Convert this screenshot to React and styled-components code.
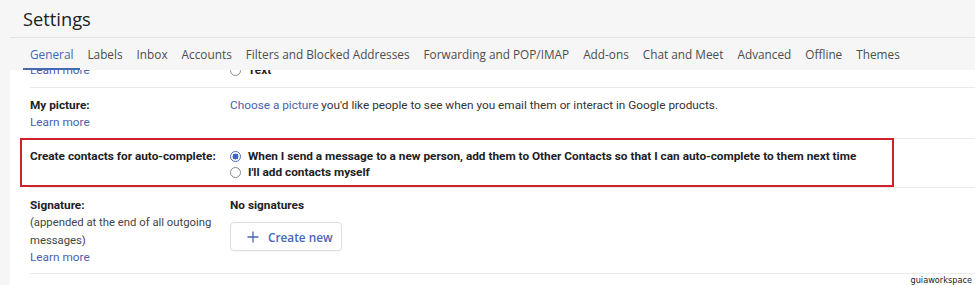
import React from "react";
import styled, { createGlobalStyle } from "styled-components";

const GlobalStyle = createGlobalStyle`
  html, body {
    margin: 0;
    padding: 0;
    background: #f6f6f6;
  }
  body {
    font-family: Roboto, "Liberation Sans", Arial, sans-serif;
    color: #202124;
  }
`;

const tabs = [
  "General",
  "Labels",
  "Inbox",
  "Accounts",
  "Filters and Blocked Addresses",
  "Forwarding and POP/IMAP",
  "Add-ons",
  "Chat and Meet",
  "Advanced",
  "Offline",
  "Themes",
];

const App = () => {
  return (
    <Page>
      <GlobalStyle />
      <Header>
        <Title>Settings</Title>
      </Header>

      <TabBar>
        {tabs.map((t, i) => (
          <Tab key={t} active={i === 0}>
            {t}
          </Tab>
        ))}
      </TabBar>

      <Content>
        {/* row partly scrolled under the tab bar */}
        <ClippedRow>
          <LabelCell>
            <Label>Button labels:</Label>
            <LinkLine>Learn more</LinkLine>
          </LabelCell>
          <ValueCell>
            <Option>
              <Radio />
              <OptionText>Icons</OptionText>
            </Option>
            <Option>
              <Radio />
              <OptionText>Text</OptionText>
            </Option>
          </ValueCell>
        </ClippedRow>

        <Row pad="9px 0 7px">
          <LabelCell>
            <Label>My picture:</Label>
            <LinkLine>Learn more</LinkLine>
          </LabelCell>
          <ValueCell>
            <PlainLine>
              <Link>Choose a picture</Link> you'd like people to see when you
              email them or interact in Google products.
            </PlainLine>
          </ValueCell>
        </Row>

        <Row pad="9px 0 7px" highlighted>
          <LabelCell>
            <Label>Create contacts for auto-complete:</Label>
          </LabelCell>
          <ValueCell>
            <Option dense>
              <Radio checked />
              <OptionText>
                When I send a message to a new person, add them to Other
                Contacts so that I can auto-complete to them next time
              </OptionText>
            </Option>
            <Option dense>
              <Radio />
              <OptionText>I'll add contacts myself</OptionText>
            </Option>
          </ValueCell>
        </Row>

        <Row pad="9px 0 7px">
          <LabelCell>
            <Label>Signature:</Label>
            <Note>(appended at the end of all outgoing</Note>
            <Note>messages)</Note>
            <LinkLine>Learn more</LinkLine>
          </LabelCell>
          <ValueCell>
            <Label>No signatures</Label>
            <CreateButton>
              <svg width="12" height="12" viewBox="0 0 12 12" aria-hidden="true">
                <path d="M6 0.5v11M0.5 6h11" stroke="#4a66b3" strokeWidth="1.3" fill="none" />
              </svg>
              Create new
            </CreateButton>
          </ValueCell>
        </Row>
      </Content>

      <Watermark>guiaworkspace</Watermark>
    </Page>
  );
};

export default App;

const Page = styled.div`
  position: relative;
  width: 975px;
  height: 285px;
  overflow: hidden;
  background: #f6f6f6;
  display: flex;
  flex-direction: column;
`;

const Header = styled.div`
  height: 37px;
  display: flex;
  align-items: center;
  padding-left: 23px;
  box-sizing: border-box;
`;

const Title = styled.h1`
  margin: 0;
  font-family: "Open Sans", Roboto, sans-serif;
  font-weight: 400;
  font-size: 18.3px;
  color: #202124;
`;

const TabBar = styled.nav`
  margin-left: 10px;
  height: 33px;
  border-top: 1px solid #e3e3e3;
  box-sizing: border-box;
  display: flex;
  align-items: stretch;
  padding-left: 13px;
`;

const Tab = styled.div`
  display: flex;
  align-items: center;
  padding: 1px 7px 0;
  font-family: "Open Sans", Roboto, sans-serif;
  font-size: 11.8px;
  white-space: nowrap;
  color: ${(p) => (p.active ? "#4767b0" : "#4d4d4d")};
  border-bottom: 2px solid ${(p) => (p.active ? "#4767b0" : "transparent")};
`;

const Content = styled.div`
  flex: 1;
  margin-left: 10px;
  background: #fff;
  padding-left: 20px;
`;

const Row = styled.div`
  position: relative;
  display: grid;
  grid-template-columns: 200px 1fr;
  padding: ${(p) => p.pad};
  border-bottom: 1px solid #ebebeb;
  line-height: 17px;

  ${(p) =>
    p.highlighted &&
    `
    &::after {
      content: "";
      position: absolute;
      top: -1px;
      bottom: 0;
      left: -10px;
      width: 874px;
      border: 2px solid #d0202a;
      box-sizing: border-box;
      pointer-events: none;
    }
  `}
`;

const ClippedRow = styled.div`
  display: flex;
  align-items: flex-end;
  height: 18px;
  box-sizing: border-box;
  overflow: hidden;
  padding-bottom: 8px;
  border-bottom: 1px solid #ebebeb;
  line-height: 17px;

  & > div:first-child {
    width: 200px;
    flex-shrink: 0;
  }
`;

const LabelCell = styled.div`
  display: flex;
  flex-direction: column;
`;

const ValueCell = styled.div`
  display: flex;
  flex-direction: column;
  align-items: flex-start;
`;

const Label = styled.div`
  font-size: 11.8px;
  font-weight: 700;
  color: #202124;
`;

const Note = styled.div`
  font-size: 11.3px;
  color: #444;
  line-height: 17.5px;
`;

const Link = styled.span`
  color: #4a62ad;
`;

const LinkLine = styled.div`
  font-size: 11.8px;
  color: #4a62ad;
`;

const PlainLine = styled.div`
  font-size: 11.8px;
  color: #333;
`;

const Option = styled.label`
  display: flex;
  align-items: center;
  gap: 7px;
  line-height: ${(p) => (p.dense ? "16px" : "17px")};
`;

const Radio = styled.span`
  width: 11px;
  height: 11px;
  border-radius: 50%;
  box-sizing: border-box;
  flex-shrink: 0;
  border: 1px solid ${(p) => (p.checked ? "#4a6bc4" : "#8a8a8a")};
  background: ${(p) =>
    p.checked
      ? "radial-gradient(circle, #3f63c6 0 2.8px, #fff 3.2px)"
      : "#fff"};
`;

const OptionText = styled.span`
  font-size: 11.8px;
  font-weight: 700;
  color: #202124;
`;

const CreateButton = styled.button`
  margin-top: 8px;
  height: 29px;
  width: 112px;
  display: flex;
  align-items: center;
  gap: 9px;
  padding: 0 0 0 16px;
  background: #fff;
  border: 1px solid #dcdfe4;
  border-radius: 4px;
  box-shadow: 0 1px 1px rgba(0, 0, 0, 0.04);
  font-family: "Open Sans", Roboto, sans-serif;
  font-size: 11.8px;
  font-weight: 600;
  color: #4a66b3;
  cursor: pointer;
`;

const Watermark = styled.div`
  position: absolute;
  right: 3px;
  bottom: 0;
  font-family: "DejaVu Sans", Verdana, sans-serif;
  font-size: 8.2px;
  color: #1a1a1a;
`;
